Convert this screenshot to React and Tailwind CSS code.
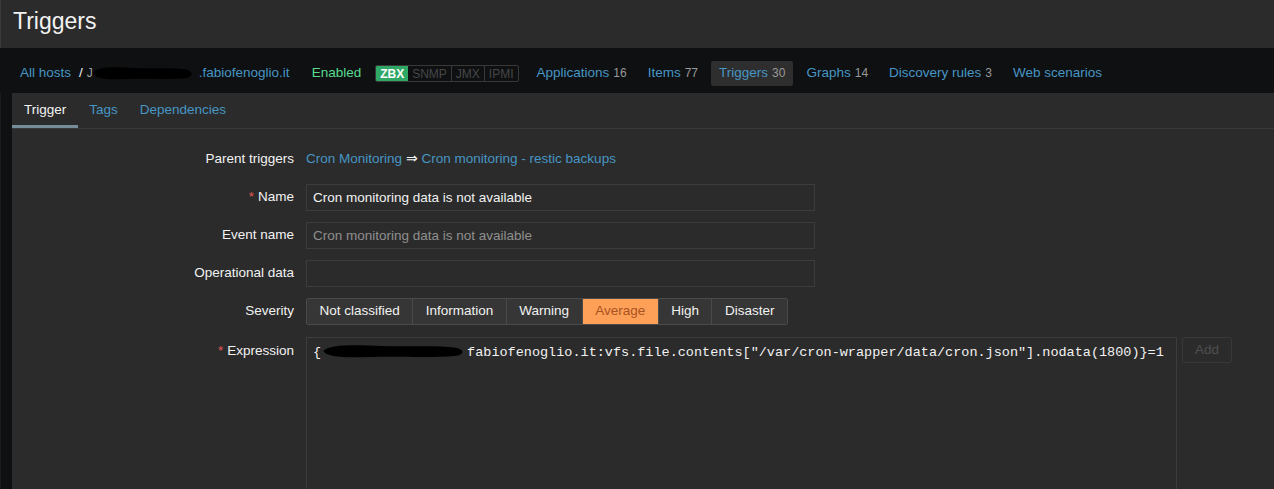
import React from "react";

const font = "font-['Liberation_Sans',Arial,sans-serif]";

function Blob({ className }) {
  return (
    <svg viewBox="0 0 120 18" preserveAspectRatio="none" className={className}>
      <path
        d="M2 9 C6 2, 30 3, 50 4 C70 5, 95 3, 112 6 C118 8, 118 13, 110 14 C90 16, 60 14, 40 15 C20 16, 4 15, 2 9 Z"
        fill="#000"
      />
    </svg>
  );
}

const navItems = [
  { label: "Applications", count: "16" },
  { label: "Items", count: "77" },
  { label: "Triggers", count: "30", active: true },
  { label: "Graphs", count: "14" },
  { label: "Discovery rules", count: "3" },
  { label: "Web scenarios" },
];

const severities = ["Not classified", "Information", "Warning", "Average", "High", "Disaster"];

function Label({ children, required }) {
  return (
    <div className="w-[282px] shrink-0 text-right text-[#f2f2f2]">
      {required && <span className="text-[#e45959] mr-[4px]">*</span>}
      {children}
    </div>
  );
}

export default function App() {
  return (
    <div className={`min-h-screen bg-[#0e1012] text-[13.5px] ${font}`}>
      <header className="h-[48px] bg-[#2b2b2b] border-l border-[#3b3b3b] pl-[12px] pt-[8px]">
        <h1 className="text-[23px] leading-[27px] text-[#f2f2f2]">Triggers</h1>
      </header>

      <nav className="h-[45px] pt-[5px] pl-[20px] flex items-center">
        <a className="text-[#4796c4]">All hosts</a>
        <span className="text-[#f2f2f2] ml-[8px]">/</span>
        <span className="ml-[4px] inline-flex items-center w-[112px] h-[16px] relative">
          <span className="text-[#9a9a9a] text-[12px]">J</span>
          <Blob className="absolute left-[4px] top-[-1px] w-[104px] h-[18px]" />
        </span>
        <a className="text-[#4796c4]">.fabiofenoglio.it</a>
        <span className="ml-[22px] text-[#59db8f]">Enabled</span>
        <div className="ml-[14px] flex h-[17px] text-[12px] leading-[17px] rounded-[2px] overflow-hidden border border-[#383838]">
          <span className="bg-[#2fa866] text-white px-[4px] font-bold">ZBX</span>
          <span className="text-[#474747] px-[4px] border-r border-[#383838]">SNMP</span>
          <span className="text-[#474747] px-[4px] border-r border-[#383838]">JMX</span>
          <span className="text-[#474747] px-[4px]">IPMI</span>
        </div>
        <ul className="ml-[10px] flex items-center gap-[5px]">
          {navItems.map((it) => (
            <li
              key={it.label}
              className={`h-[25px] px-[8px] flex items-center rounded-[2px] ${it.active ? "bg-[#2e2e2e]" : ""}`}
            >
              <span className="text-[#4796c4]">{it.label}</span>
              {it.count && <span className="ml-[4px] text-[12px] text-[#999]">{it.count}</span>}
            </li>
          ))}
        </ul>
      </nav>

      <div className="flex">
        <div className="w-[12px] shrink-0 border-l border-[#1c1c1c]" />
        <main className="flex-1 bg-[#2b2b2b] min-h-[400px]">
          <div className="h-[36px] flex border-b border-[#3a3a3a]">
            <div className="px-[12px] flex items-center text-[#f2f2f2] border-b-[3px] border-[#768d99] pt-[3px]">Trigger</div>
            <div className="px-[11px] flex items-center text-[#4796c4]">Tags</div>
            <div className="px-[11px] flex items-center text-[#4796c4]">Dependencies</div>
          </div>

          <div className="pt-[17px] flex flex-col gap-[12px]">
            <div className="h-[26px] flex items-center">
              <Label>Parent triggers</Label>
              <div className="ml-[12px]">
                <a className="text-[#4796c4]">Cron Monitoring</a>
                <span className="text-[#f2f2f2]"> ⇒ </span>
                <a className="text-[#4796c4]">Cron monitoring - restic backups</a>
              </div>
            </div>

            <div className="h-[26px] flex items-center">
              <Label required>Name</Label>
              <input
                readOnly
                value="Cron monitoring data is not available"
                className="ml-[12px] w-[509px] h-[27px] px-[6px] bg-[#2b2b2b] border border-[#3c3c3c] text-[#f2f2f2] outline-none"
              />
            </div>

            <div className="h-[26px] flex items-center">
              <Label>Event name</Label>
              <input
                readOnly
                placeholder="Cron monitoring data is not available"
                className="ml-[12px] w-[509px] h-[27px] px-[6px] bg-[#2b2b2b] border border-[#3c3c3c] text-[#f2f2f2] placeholder:text-[#8f8f8f] outline-none"
              />
            </div>

            <div className="h-[26px] flex items-center">
              <Label>Operational data</Label>
              <input
                readOnly
                className="ml-[12px] w-[509px] h-[27px] px-[6px] bg-[#2b2b2b] border border-[#3c3c3c] text-[#f2f2f2] outline-none"
              />
            </div>

            <div className="h-[27px] flex items-center">
              <Label>Severity</Label>
              <div className="ml-[12px] flex h-[27px] border border-[#4a4a4a] rounded-[2px] overflow-hidden">
                {severities.map((s, i) => (
                  <div
                    key={s}
                    className={`px-[12.5px] flex items-center ${i < severities.length - 1 ? "border-r border-[#4a4a4a]" : ""} ${
                      s === "Average" ? "bg-[#ffa059] text-[#a8531f]" : "bg-[#363636] text-[#f2f2f2]"
                    }`}
                  >
                    {s}
                  </div>
                ))}
              </div>
            </div>

            <div className="flex items-start">
              <Label required>
                <span className="inline-block leading-[26px] pt-[1px]">Expression</span>
              </Label>
              <div className="ml-[12px] w-[871px] h-[170px] border border-[#3c3c3c] bg-[#2b2b2b] pl-[6px] pt-[5px] font-['Liberation_Mono','Courier_New',monospace] text-[13.5px] text-[#f2f2f2] whitespace-pre flex items-start">
                <span>{"{"}</span>
                <span className="relative inline-block w-[146px] h-[16px]">
                  <Blob className="absolute left-0 top-[-1px] w-[146px] h-[18px]" />
                </span>
                <span>fabiofenoglio.it:vfs.file.contents["/var/cron-wrapper/data/cron.json"].nodata(1800)}=1</span>
              </div>
              <button className="ml-[5px] w-[50px] h-[26px] border border-[#383838] rounded-[2px] text-[#4f4f4f]">Add</button>
            </div>
          </div>
        </main>
      </div>
    </div>
  );
}
